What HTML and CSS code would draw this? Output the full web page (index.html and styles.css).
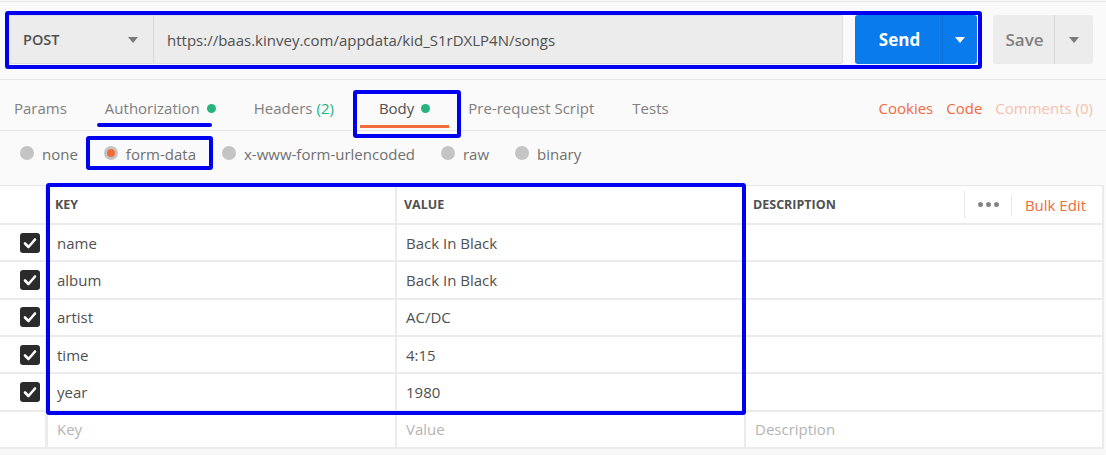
FILE: index.html
```html
<!DOCTYPE html>
<html>
<head>
<meta charset="utf-8">
<link rel="stylesheet" href="styles.css">
</head>
<body>
<div class="app">
  <div class="topline"></div>
  <div class="reqbar">
    <div class="urlgroup">
      <div class="method"><span>POST</span><span class="caret grey"></span></div>
      <div class="url">https://baas.kinvey.com/appdata/kid_S1rDXLP4N/songs</div>
    </div>
    <div class="send"><span class="send-main">Send</span><span class="send-drop"><span class="caret white"></span></span></div>
    <div class="save"><span class="save-main">Save</span><span class="save-drop"><span class="caret grey"></span></span></div>
  </div>
  <div class="tabs">
    <div class="tab first">Params</div>
    <div class="tab">Authorization<span class="dot"></span></div>
    <div class="tab">Headers <span class="green">(2)</span></div>
    <div class="tab active">Body<span class="dot"></span></div>
    <div class="tab">Pre-request Script</div>
    <div class="tab">Tests</div>
    <div class="links">
      <span class="link">Cookies</span>
      <span class="link">Code</span>
      <span class="link faded">Comments (0)</span>
    </div>
  </div>
  <div class="bodytypes">
    <div class="opt"><span class="radio"></span>none</div>
    <div class="opt"><span class="radio on"></span>form-data</div>
    <div class="opt"><span class="radio"></span>x-www-form-urlencoded</div>
    <div class="opt"><span class="radio"></span>raw</div>
    <div class="opt"><span class="radio"></span>binary</div>
  </div>
  <div class="table">
    <div class="row head">
      <div class="cell chk"></div>
      <div class="cell key">KEY</div>
      <div class="cell val">VALUE</div>
      <div class="cell desc">DESCRIPTION
        <div class="tools"><span class="sep"></span><span class="dots"><i></i><i></i><i></i></span><span class="sep"></span><span class="bulk">Bulk Edit</span></div>
      </div>
    </div>
    <div class="row"><div class="cell chk"><span class="cb"><svg viewBox="0 0 20 20" width="20" height="20"><path d="M5 10.5 L8.5 14 L15 6.5" fill="none" stroke="#fff" stroke-width="2.6" stroke-linecap="round" stroke-linejoin="round"/></svg></span></div><div class="cell key">name</div><div class="cell val">Back In Black</div><div class="cell desc"></div></div>
    <div class="row"><div class="cell chk"><span class="cb"><svg viewBox="0 0 20 20" width="20" height="20"><path d="M5 10.5 L8.5 14 L15 6.5" fill="none" stroke="#fff" stroke-width="2.6" stroke-linecap="round" stroke-linejoin="round"/></svg></span></div><div class="cell key">album</div><div class="cell val">Back In Black</div><div class="cell desc"></div></div>
    <div class="row"><div class="cell chk"><span class="cb"><svg viewBox="0 0 20 20" width="20" height="20"><path d="M5 10.5 L8.5 14 L15 6.5" fill="none" stroke="#fff" stroke-width="2.6" stroke-linecap="round" stroke-linejoin="round"/></svg></span></div><div class="cell key">artist</div><div class="cell val">AC/DC</div><div class="cell desc"></div></div>
    <div class="row"><div class="cell chk"><span class="cb"><svg viewBox="0 0 20 20" width="20" height="20"><path d="M5 10.5 L8.5 14 L15 6.5" fill="none" stroke="#fff" stroke-width="2.6" stroke-linecap="round" stroke-linejoin="round"/></svg></span></div><div class="cell key">time</div><div class="cell val">4:15</div><div class="cell desc"></div></div>
    <div class="row"><div class="cell chk"><span class="cb"><svg viewBox="0 0 20 20" width="20" height="20"><path d="M5 10.5 L8.5 14 L15 6.5" fill="none" stroke="#fff" stroke-width="2.6" stroke-linecap="round" stroke-linejoin="round"/></svg></span></div><div class="cell key">year</div><div class="cell val">1980</div><div class="cell desc"></div></div>
    <div class="row ph"><div class="cell chk"></div><div class="cell key">Key</div><div class="cell val">Value</div><div class="cell desc">Description</div></div>
  </div>

  <div class="mark mark-req"></div>
  <div class="mark mark-auth"></div>
  <div class="mark mark-body"></div>
  <div class="mark mark-form"></div>
  <div class="mark mark-table"></div>
</div>
</body>
</html>
```

FILE: styles.css
```css
* { box-sizing: border-box; }
html, body { margin: 0; padding: 0; }
body {
  background: #f7f7f7;
  font-family: "Open Sans", "Liberation Sans", sans-serif;
  font-size: 15px;
  color: #505050;
  width: 1106px;
  height: 455px;
  overflow: hidden;
}
.app { position: relative; background: #fafafa; height: 449px; }
.topline { height: 1px; margin-top: 1px; background: #e8e8e8; }

.reqbar {
  display: flex;
  align-items: stretch;
  padding: 13px 13px 0 8px;
  height: 63px;
}
.urlgroup {
  display: flex;
  width: 835px;
  height: 49px;
  background: #ececec;
  border: 1px solid #dedede;
  border-radius: 2px;
}
.method {
  width: 145px;
  display: flex;
  align-items: center;
  justify-content: space-between;
  padding: 0 15px 0 14px;
  font-weight: 600;
  font-size: 14.5px;
  color: #505050;
  border-right: 1px solid #d9d9d9;
}
.url {
  flex: 1;
  display: flex;
  align-items: center;
  padding-left: 13px;
  color: #505050;
  font-size: 15px;
}
.caret {
  display: inline-block;
  width: 0; height: 0;
  border-left: 5px solid transparent;
  border-right: 5px solid transparent;
  border-top: 6px solid #777;
}
.caret.white { border-top-color: #fff; }
.caret.grey { border-top-color: #7a7a7a; }

.send {
  margin-left: 12px;
  width: 122px;
  height: 49px;
  display: flex;
  background: #097bed;
  border-radius: 3px;
  color: #fff;
  font-weight: 700;
  font-size: 17px;
}
.send-main { width: 87px; display: flex; align-items: center; justify-content: center; padding-left: 2px; }
.send-drop { flex: 1; display: flex; align-items: center; justify-content: center; border-left: 1px solid #0a6cd0; }
.save {
  margin-left: 16px;
  width: 100px;
  height: 49px;
  display: flex;
  background: #ececec;
  border-radius: 3px;
  color: #808080;
  font-weight: 600;
  font-size: 17px;
}
.save-main { width: 61px; display: flex; align-items: center; justify-content: center; padding-left: 2px; }
.save-drop { flex: 1; display: flex; align-items: center; justify-content: center; border-left: 1px solid #dadada; }

.tabs {
  display: flex;
  align-items: flex-start;
  margin-top: 14px;
  border-top: 1px solid #e6e6e6;
  border-bottom: 1px solid #e6e6e6;
  height: 52px;
}
.tab {
  height: 48px;
  padding: 18px 19px 0;
  line-height: 20px;
  color: #808080;
  display: flex;
  align-items: flex-start;
  white-space: nowrap;
}
.tab.first { padding-left: 14px; }
.tab.active { color: #505050; border-bottom: 3px solid #f26b3a; margin-left: 7px; }
.green { color: #26b47f; margin-left: 4px; }
.dot {
  width: 9px; height: 9px;
  border-radius: 50%;
  background: #26b47f;
  margin: 6px 0 0 7px;
}
.links {
  margin-left: auto;
  padding: 18px 13px 0 0;
  line-height: 20px;
  display: flex;
  gap: 13px;
}
.link { color: #f26b3a; }
.link.faded { color: #f7c0ab; }

.bodytypes {
  display: flex;
  gap: 26px;
  padding: 13px 0 0 20px;
  height: 54px;
  align-items: flex-start;
}
.opt {
  display: flex;
  align-items: center;
  gap: 8px;
  color: #707070;
  line-height: 20px;
  height: 20px;
}
.radio {
  width: 14px; height: 14px;
  border-radius: 50%;
  background: #c4c4c4;
  display: flex;
  align-items: center;
  justify-content: center;
  margin-top: -3px;
}
.radio.on::after {
  content: "";
  width: 8px; height: 8px;
  border-radius: 50%;
  background: #f26b3a;
}

.table {
  width: 1104px;
  background: #fff;
  border-top: 1px solid #e6e6e6;
  border-right: 2px solid #ebebeb;
}
.row {
  display: grid;
  grid-template-columns: 45px 350px 349px 1fr;
  height: 37.33px;
  border-bottom: 2px solid #ebebeb;
}
.row.head { height: 39px; }
.cell {
  display: flex;
  align-items: center;
  padding-left: 9px;
  color: #505050;
  white-space: nowrap;
}
.cell.key { border-left: 3px solid #ebebeb; }
.cell.val, .cell.desc { border-left: 2px solid #ebebeb; }
.cell.chk { justify-content: flex-end; padding: 0 5px 0 0; }
.head .cell { font-size: 12.5px; font-weight: 700; padding-left: 7px; padding-top: 0; }
.head .cell.chk { padding: 0; }
.ph .cell { color: #b4b4b4; }
.cb {
  width: 20px; height: 20px;
  background: #2b2b2b;
  border-radius: 3px;
  display: block;
}
.cb svg { display: block; }
.cell.desc { position: relative; }
.tools {
  margin-left: auto;
  display: flex;
  align-items: center;
  height: 100%;
  font-weight: 400;
  font-size: 15px;
}
.sep { width: 1px; height: 27px; background: #e6e6e6; }
.tools .sep:nth-of-type(3) { height: 20px; }
.dots { display: flex; gap: 3px; padding: 0 12px 0 13px; }
.dots i { width: 5px; height: 5px; border-radius: 50%; background: #858585; display: block; }
.bulk { color: #f26b3a; padding: 0 16px 0 13px; }

.mark { position: absolute; border: 4px solid #0000f0; border-radius: 3px; pointer-events: none; }
.mark-req { left: 5px; top: 10px; width: 977px; height: 58px; }
.mark-auth { left: 97px; top: 122px; width: 115px; height: 4px; border-width: 2px; border-radius: 2px; background: #0000f0; }
.mark-body { left: 353px; top: 89px; width: 108px; height: 48px; }
.mark-form { left: 86px; top: 135px; width: 127px; height: 34px; }
.mark-table { left: 46px; top: 182px; width: 700px; height: 232px; }
```
